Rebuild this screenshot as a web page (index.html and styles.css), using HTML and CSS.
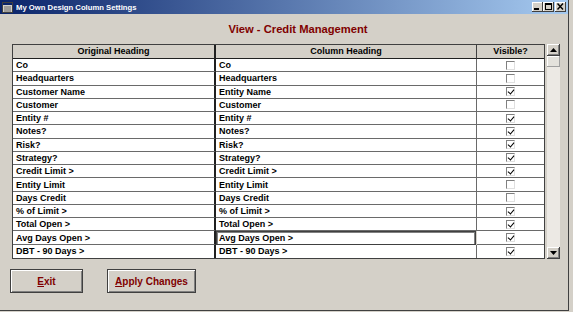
FILE: index.html
```html
<!DOCTYPE html>
<html lang="en">

<head>
    <meta charset="UTF-8">
    <title>My Own Design Column Settings</title>
    <link rel="stylesheet" href="styles.css">
</head>

<body>
    <div class="window">
        <div class="titlebar">
            <svg class="app_icon" width="11" height="11" viewBox="0 0 11 11">
                <rect x="0.5" y="0.5" width="10" height="10" fill="#d4d0c8" stroke="#404040"/>
                <rect x="1" y="1" width="9" height="2" fill="#0a246a"/>
                <path d="M2 5h7M2 7h7M2 9h7" stroke="#6a6a6a" stroke-width="1"/>
            </svg>
            <span class="title_text">My Own Design Column Settings</span>
            <div class="caption_btns">
                <span class="cap_btn"><svg width="11" height="10" viewBox="0 0 11 10"><rect x="2" y="6" width="5" height="2" fill="#000"/></svg></span>
                <span class="cap_btn"><svg width="11" height="10" viewBox="0 0 11 10"><rect x="2.5" y="1.5" width="6" height="6" fill="none" stroke="#000"/><rect x="2" y="1" width="7" height="2" fill="#000"/></svg></span>
                <span class="cap_btn close"><svg width="11" height="10" viewBox="0 0 11 10"><path d="M2.5 1.5l5.5 6M8 1.5l-5.5 6" stroke="#000" stroke-width="1.4"/></svg></span>
            </div>
        </div>

        <div class="subtitle">View - Credit Management</div>

        <div class="list_area">
            <div class="grid">
                <div class="head c1">Original Heading</div>
                <div class="head c2">Column Heading</div>
                <div class="head c3">Visible?</div>

                <div class="cell c1">Co</div><div class="cell c2">Co</div><div class="cell c3"><span class="chk"></span></div>
                <div class="cell c1">Headquarters</div><div class="cell c2">Headquarters</div><div class="cell c3"><span class="chk"></span></div>
                <div class="cell c1">Customer Name</div><div class="cell c2">Entity Name</div><div class="cell c3"><span class="chk on"></span></div>
                <div class="cell c1">Customer</div><div class="cell c2">Customer</div><div class="cell c3"><span class="chk"></span></div>
                <div class="cell c1">Entity #</div><div class="cell c2">Entity #</div><div class="cell c3"><span class="chk on"></span></div>
                <div class="cell c1">Notes?</div><div class="cell c2">Notes?</div><div class="cell c3"><span class="chk on"></span></div>
                <div class="cell c1">Risk?</div><div class="cell c2">Risk?</div><div class="cell c3"><span class="chk on"></span></div>
                <div class="cell c1">Strategy?</div><div class="cell c2">Strategy?</div><div class="cell c3"><span class="chk on"></span></div>
                <div class="cell c1">Credit Limit &gt;</div><div class="cell c2">Credit Limit &gt;</div><div class="cell c3"><span class="chk on"></span></div>
                <div class="cell c1">Entity Limit</div><div class="cell c2">Entity Limit</div><div class="cell c3"><span class="chk"></span></div>
                <div class="cell c1">Days Credit</div><div class="cell c2">Days Credit</div><div class="cell c3"><span class="chk"></span></div>
                <div class="cell c1">% of Limit &gt;</div><div class="cell c2">% of Limit &gt;</div><div class="cell c3"><span class="chk on"></span></div>
                <div class="cell c1">Total Open &gt;</div><div class="cell c2">Total Open &gt;</div><div class="cell c3"><span class="chk on"></span></div>
                <div class="cell c1">Avg Days Open &gt;</div><div class="cell c2 editing">Avg Days Open &gt;</div><div class="cell c3"><span class="chk on"></span></div>
                <div class="cell c1">DBT - 90 Days &gt;</div><div class="cell c2">DBT - 90 Days &gt;</div><div class="cell c3"><span class="chk on"></span></div>
            </div>

            <div class="scrollbar">
                <span class="sb_btn"><svg width="7" height="4" viewBox="0 0 7 4"><path d="M3.5 0L7 4H0z" fill="#000"/></svg></span>
                <span class="sb_thumb"></span>
                <span class="sb_track"></span>
                <span class="sb_btn"><svg width="7" height="4" viewBox="0 0 7 4"><path d="M0 0h7L3.5 4z" fill="#000"/></svg></span>
            </div>
        </div>

        <div class="buttons">
            <button class="btn exit"><u>E</u>xit</button>
            <button class="btn apply"><u>A</u>pply Changes</button>
        </div>
    </div>
</body>

</html>
```

FILE: styles.css
```css
* {
    margin: 0;
    padding: 0;
    box-sizing: border-box;
}

body {
    background: #d4d0c8;
    font-family: "Liberation Sans", Arial, sans-serif;
    font-weight: bold;
    width: 573px;
    height: 312px;
    overflow: hidden;
}

.window {
    width: 569px;
    height: 311px;
    border-right: 1px solid #404040;
    border-bottom: 1px solid #404040;
}

.titlebar {
    height: 14px;
    display: flex;
    align-items: center;
    background: linear-gradient(to right, #0a246a, #a6caf0);
    color: #fff;
    padding-left: 2px;
}

.app_icon {
    margin-right: 3px;
}

.title_text {
    font-size: 7.7px;
    flex: 1;
}

.caption_btns {
    display: flex;
    padding-right: 2px;
}

.cap_btn {
    width: 11px;
    height: 10px;
    background: #d4d0c8;
    box-shadow: inset -1px -1px #404040, inset 1px 1px #fff;
    display: flex;
}

.cap_btn.close {
    margin-left: 1px;
}

.subtitle {
    margin-top: 8px;
    height: 14px;
    line-height: 14px;
    font-size: 11.2px;
    color: #800000;
    text-align: center;
    padding-left: 28px;
}

.list_area {
    margin-top: 8px;
    margin-left: 12px;
    display: flex;
    gap: 2px;
}

.grid {
    width: 533px;
    height: 215px;
    border: 1px solid #404040;
    display: grid;
    grid-template-columns: 203px 261px 67px;
    grid-template-rows: 14px repeat(15, 1fr);
    font-size: 9px;
    color: #000;
}

.head {
    background: #d4d0c8;
    border-bottom: 1px solid #202020;
    border-right: 1px solid #404040;
    text-align: center;
    line-height: 13px;
}

.cell {
    background: #fff;
    border-bottom: 1px solid #6a6a6a;
    border-right: 1px solid #6a6a6a;
    display: flex;
    align-items: center;
    padding-left: 3px;
}

.c1 {
    border-right: 2px solid #202020;
}

.c3 {
    border-right: none;
    justify-content: center;
    padding-left: 0;
}

.cell:nth-last-child(-n+3) {
    border-bottom: none;
}

.cell.editing {
    border: 1px solid #404040;
    box-shadow: inset 1px 1px #808080, inset -1px 0 #808080;
    margin-right: 1px;
    padding-left: 2px;
}

.chk {
    width: 9px;
    height: 9px;
    background: #fff;
    border: 1px solid;
    border-color: #808080 #e0e0e0 #e0e0e0 #808080;
    position: relative;
}

.chk.on::after {
    content: "";
    position: absolute;
    left: 1.5px;
    top: 0px;
    width: 3px;
    height: 5px;
    border-right: 1.5px solid #000;
    border-bottom: 1.5px solid #000;
    transform: rotate(40deg);
}

.scrollbar {
    width: 13px;
    height: 215px;
    display: flex;
    flex-direction: column;
    background: #ece9e4;
}

.sb_btn,
.sb_thumb {
    height: 12px;
    background: #d4d0c8;
    box-shadow: inset -1px -1px #404040, inset 1px 1px #fff, inset -2px -2px #808080;
    display: flex;
    align-items: center;
    justify-content: center;
}

.sb_thumb {
    height: 11px;
    box-shadow: inset -1px -1px #a0a0a0, inset 1px 1px #fff;
    background: #e4e2dc;
}

.sb_track {
    flex: 1;
}

.buttons {
    margin-top: 10px;
    margin-left: 10px;
    display: flex;
    gap: 24px;
}

.btn {
    height: 24px;
    font-family: "Liberation Sans", Arial, sans-serif;
    font-weight: bold;
    font-size: 10px;
    color: #800000;
    background: #d4d0c8;
    border: 1px solid #404040;
    box-shadow: inset 1px 1px #fff, inset -1px -1px #808080;
}

.exit {
    width: 73px;
}

.apply {
    width: 89px;
}
```
